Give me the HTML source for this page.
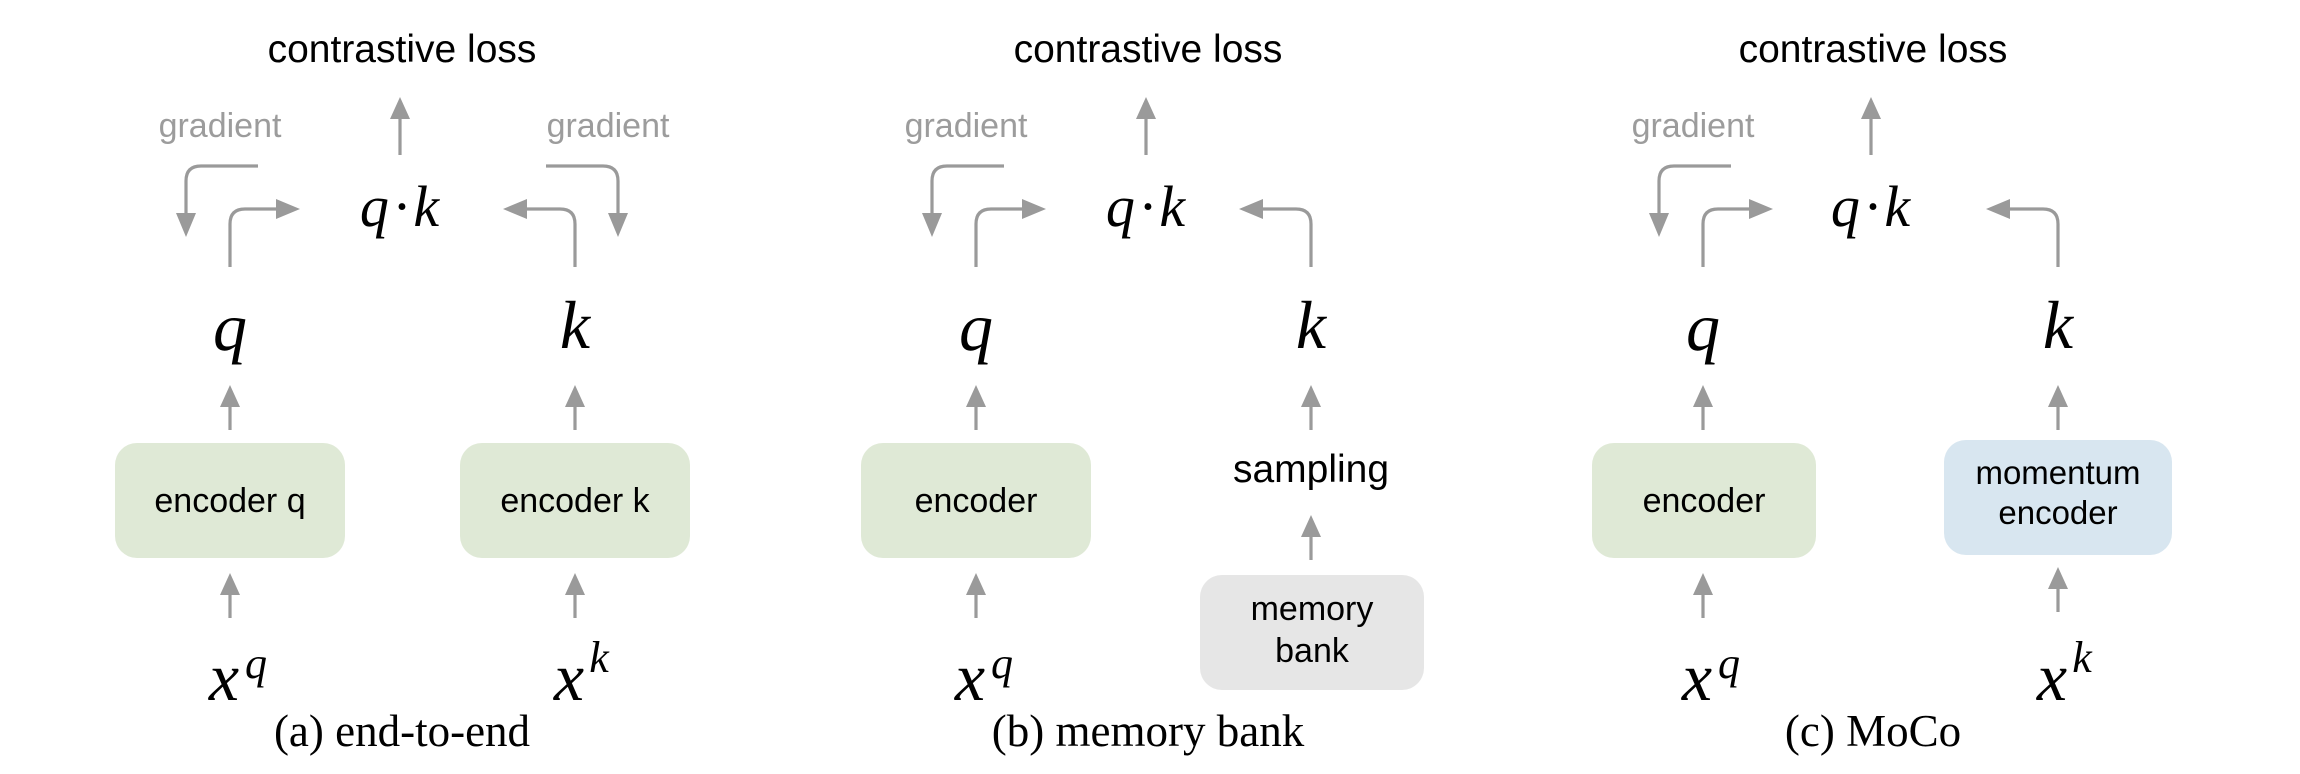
<!DOCTYPE html>
<html><head><meta charset="utf-8"><style>
html,body{margin:0;padding:0;background:#fff;width:2300px;height:774px;overflow:hidden}
svg{display:block}
.s{font-family:"Liberation Sans",Arial,sans-serif;fill:#000}
.g{font-family:"Liberation Sans",Arial,sans-serif;fill:#9c9c9c}
.m{font-family:"Liberation Serif","DejaVu Serif",serif;font-style:italic;fill:#000}
.c{font-family:"Liberation Serif","DejaVu Serif",serif;fill:#000}
.l{fill:none;stroke:#9a9a9a;stroke-width:3.2}
.h{fill:#9a9a9a}
</style></head><body>
<svg width="2300" height="774" viewBox="0 0 2300 774" xmlns="http://www.w3.org/2000/svg">
<defs>
<g id="up"><line class="l" x1="0" y1="45" x2="0" y2="18"/><polygon class="h" points="0,0 -10,22 10,22"/></g>
<g id="left">
  <path class="l" d="M28 166 H-29 Q-44 166 -44 181 V216"/>
  <polygon class="h" points="-44,237 -54,213 -34,213"/>
  <path class="l" d="M0 267 V224 Q0 209 15 209 H48"/>
  <polygon class="h" points="70,209 46,199 46,219"/>
  <use href="#up" x="0" y="385"/>
  <use href="#up" x="0" y="573"/>
  <text class="m" x="0" y="350" font-size="68" text-anchor="middle">q</text>
  <text class="m" x="-6" y="700" font-size="68" text-anchor="middle">x</text>
  <text class="m" x="26" y="678" font-size="44" text-anchor="middle">q</text>
</g>
<g id="kpath">
  <path class="l" d="M0 267 V224 Q0 209 -15 209 H-50"/>
  <polygon class="h" points="-72,209 -48,199 -48,219"/>
  <use href="#up" x="0" y="385"/>
  <text class="m" x="0" y="348" font-size="68" text-anchor="middle">k</text>
</g>
</defs>

<!-- ===== Panel a ===== -->
<text class="s" x="402" y="62" font-size="39" text-anchor="middle">contrastive loss</text>
<line class="l" x1="400" y1="155" x2="400" y2="118"/><polygon class="h" points="400,97 390,119 410,119"/>
<text class="m" x="402" y="226" font-size="58" text-anchor="middle" letter-spacing="5">q·k</text>
<text class="g" x="220" y="137" font-size="34" text-anchor="middle">gradient</text>
<text class="g" x="608" y="137" font-size="34" text-anchor="middle">gradient</text>
<use href="#left" x="230" y="0"/>
<use href="#kpath" x="575" y="0"/>
<path class="l" d="M546 166 H603 Q618 166 618 181 V216"/>
<polygon class="h" points="618,237 608,213 628,213"/>
<use href="#up" x="575" y="573"/>
<text class="m" x="569" y="700" font-size="68" text-anchor="middle">x</text>
<text class="m" x="599" y="672" font-size="44" text-anchor="middle">k</text>
<rect x="115" y="443" width="230" height="115" rx="22" fill="#dfe9d6"/>
<text class="s" x="230" y="512" font-size="34" text-anchor="middle">encoder q</text>
<rect x="460" y="443" width="230" height="115" rx="22" fill="#dfe9d6"/>
<text class="s" x="575" y="512" font-size="34" text-anchor="middle">encoder k</text>
<text class="c" x="402" y="746" font-size="45" text-anchor="middle">(a) end-to-end</text>

<!-- ===== Panel b ===== -->
<text class="s" x="1148" y="62" font-size="39" text-anchor="middle">contrastive loss</text>
<line class="l" x1="1146" y1="155" x2="1146" y2="118"/><polygon class="h" points="1146,97 1136,119 1156,119"/>
<text class="m" x="1148" y="226" font-size="58" text-anchor="middle" letter-spacing="5">q·k</text>
<text class="g" x="966" y="137" font-size="34" text-anchor="middle">gradient</text>
<use href="#left" x="976" y="0"/>
<use href="#kpath" x="1311" y="0"/>
<rect x="861" y="443" width="230" height="115" rx="22" fill="#dfe9d6"/>
<text class="s" x="976" y="512" font-size="34" text-anchor="middle">encoder</text>
<text class="s" x="1311" y="482" font-size="39" text-anchor="middle">sampling</text>
<use href="#up" x="1311" y="515"/>
<rect x="1200" y="575" width="224" height="115" rx="22" fill="#e6e6e6"/>
<text class="s" x="1312" y="620" font-size="34" text-anchor="middle">memory</text>
<text class="s" x="1312" y="662" font-size="34" text-anchor="middle">bank</text>
<text class="c" x="1148" y="746" font-size="45" text-anchor="middle">(b) memory bank</text>

<!-- ===== Panel c ===== -->
<text class="s" x="1873" y="62" font-size="39" text-anchor="middle">contrastive loss</text>
<line class="l" x1="1871" y1="155" x2="1871" y2="118"/><polygon class="h" points="1871,97 1861,119 1881,119"/>
<text class="m" x="1873" y="226" font-size="58" text-anchor="middle" letter-spacing="5">q·k</text>
<text class="g" x="1693" y="137" font-size="34" text-anchor="middle">gradient</text>
<use href="#left" x="1703" y="0"/>
<use href="#kpath" x="2058" y="0"/>
<rect x="1592" y="443" width="224" height="115" rx="22" fill="#dfe9d6"/>
<text class="s" x="1704" y="512" font-size="34" text-anchor="middle">encoder</text>
<rect x="1944" y="440" width="228" height="115" rx="22" fill="#d8e6f0"/>
<text class="s" x="2058" y="484" font-size="33" text-anchor="middle">momentum</text>
<text class="s" x="2058" y="524" font-size="33" text-anchor="middle">encoder</text>
<use href="#up" x="2058" y="567"/>
<text class="m" x="2052" y="700" font-size="68" text-anchor="middle">x</text>
<text class="m" x="2082" y="672" font-size="44" text-anchor="middle">k</text>
<text class="c" x="1873" y="746" font-size="45" text-anchor="middle">(c) MoCo</text>
</svg>
</body></html>
